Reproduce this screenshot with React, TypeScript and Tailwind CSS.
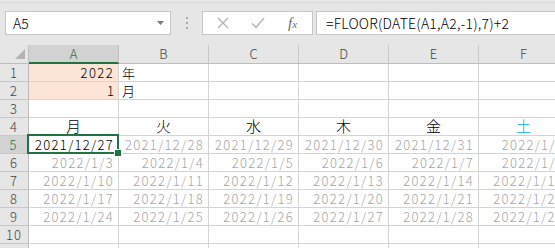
import React from "react";

const cols = ["A", "B", "C", "D", "E", "F"];
const weekdays = ["月", "火", "水", "木", "金", "土"];

function fmt(d: Date) {
  return `${d.getFullYear()}/${d.getMonth() + 1}/${d.getDate()}`;
}

// calendar rows 5-9, first Monday 2021/12/27
const start = new Date(2021, 11, 27);
const weeks = [0, 1, 2, 3, 4].map((w) =>
  cols.map((_, i) => {
    const d = new Date(start);
    d.setDate(start.getDate() + w * 7 + i);
    return fmt(d);
  })
);

function RowHead({ n, active }: { n: number; active?: boolean }) {
  return (
    <div
      className={
        active
          ? "w-[29px] h-[18px] shrink-0 flex items-center justify-center bg-[#d2d2d2] text-[#217346] border-b border-[#c8c8c8] border-r-2 border-r-[#217346] text-[13px] tracking-[1px]"
          : "w-[29px] h-[18px] shrink-0 flex items-center justify-center bg-[#e6e6e6] text-[#444] border-b border-r border-[#c8c8c8] border-r-[#bdbdbd] text-[13px] tracking-[1px]"
      }
    >
      {n}
    </div>
  );
}

function Cell({
  children,
  className = "",
}: {
  children?: React.ReactNode;
  className?: string;
}) {
  return (
    <div
      className={`w-[90px] h-[18px] shrink-0 flex items-center border-r border-b border-[#d4d4d4] whitespace-nowrap ${className}`}
    >
      {children}
    </div>
  );
}

export default function App() {
  return (
    <div className="relative w-[555px] h-[248px] overflow-hidden bg-white font-['Noto_Sans_CJK_JP',sans-serif] font-light text-black">
      {/* formula bar */}
      <div className="h-[45px] bg-[#e6e6e6]">
        <div className="h-[3px] border-b border-[#d8d8d8]" />
        <div className="flex pt-[8px] h-[32px]">
          <div className="ml-[5px] w-[166px] h-[24px] bg-white border border-[#c6c6c6] flex items-center pl-[7px] pr-[6px] text-[14px]">
            <span className="flex-1">A5</span>
            <svg width="7" height="4" viewBox="0 0 7 4">
              <path d="M0 0h7L3.5 4z" fill="#7a7a7a" />
            </svg>
          </div>
          <div className="w-[31px] flex flex-col items-center justify-center gap-[3px]">
            <span className="w-[2px] h-[2px] bg-[#a8a8a8]" />
            <span className="w-[2px] h-[2px] bg-[#a8a8a8]" />
            <span className="w-[2px] h-[2px] bg-[#a8a8a8]" />
          </div>
          <div className="w-[111px] h-[24px] bg-white border border-[#c6c6c6] flex items-center">
            <svg className="ml-[14px]" width="12" height="12" viewBox="0 0 12 12">
              <path d="M1 1l10 10M11 1L1 11" stroke="#b4b4b4" strokeWidth="1.3" />
            </svg>
            <svg className="ml-[22px]" width="14" height="12" viewBox="0 0 14 12">
              <path d="M1 6.5l4 4L13 1" stroke="#b4b4b4" strokeWidth="1.5" fill="none" />
            </svg>
            <span className="ml-[23px] font-['Liberation_Serif',serif] italic text-[15px] text-[#6a6a6a] leading-none">
              f<span className="text-[11px]">x</span>
            </span>
          </div>
          <div className="ml-[3px] flex-1 h-[24px] bg-white border border-[#c6c6c6] border-r-0 flex items-center pl-[9px] text-[14px] tracking-[0.2px]">
            =FLOOR(DATE(A1,A2,-1),7)+2
          </div>
        </div>
      </div>

      {/* sheet */}
      <div className="w-[569px]">
        {/* column headers */}
        <div className="flex h-[19px]">
          <div className="w-[29px] h-[19px] shrink-0 bg-[#e6e6e6] border-r border-b border-[#bdbdbd] flex items-end justify-end pr-[3px] pb-[4px]">
            <svg width="10" height="10" viewBox="0 0 10 10">
              <path d="M10 0v10H0z" fill="#b4b4b4" />
            </svg>
          </div>
          {cols.map((c, i) => (
            <div
              key={c}
              className={
                i === 0
                  ? "w-[90px] h-[19px] shrink-0 flex items-center justify-center bg-[#d2d2d2] text-[#217346] border-r border-[#bdbdbd] border-b-2 border-b-[#217346] text-[13px]"
                  : "w-[90px] h-[19px] shrink-0 flex items-center justify-center bg-[#e6e6e6] text-[#444] border-r border-b border-[#c8c8c8] border-b-[#bdbdbd] text-[13px]"
              }
            >
              {c}
            </div>
          ))}
        </div>

        {/* row 1 */}
        <div className="flex">
          <RowHead n={1} />
          <Cell className="justify-end pr-[4px] bg-[#fce4d6] text-[13px] tracking-[1.4px]">2022</Cell>
          <Cell className="pl-[3px] text-[13px]">年</Cell>
          {[2, 3, 4, 5].map((k) => (
            <Cell key={k} />
          ))}
        </div>
        {/* row 2 */}
        <div className="flex">
          <RowHead n={2} />
          <Cell className="justify-end pr-[4px] bg-[#fce4d6] text-[13px]">1</Cell>
          <Cell className="pl-[3px] text-[13px]">月</Cell>
          {[2, 3, 4, 5].map((k) => (
            <Cell key={k} />
          ))}
        </div>
        {/* row 3 */}
        <div className="flex">
          <RowHead n={3} />
          {cols.map((c) => (
            <Cell key={c} />
          ))}
        </div>
        {/* row 4 weekdays */}
        <div className="flex">
          <RowHead n={4} />
          {weekdays.map((w, i) => (
            <Cell
              key={w}
              className={`justify-center text-[15px] ${i === 5 ? "text-[#00b0f0]" : ""}`}
            >
              {w}
            </Cell>
          ))}
        </div>
        {/* rows 5-9 dates */}
        {weeks.map((row, r) => (
          <div key={r} className="flex">
            <RowHead n={r + 5} active={r === 0} />
            {row.map((d, i) => (
              <Cell
                key={i}
                className={`justify-end pr-[4px] text-[13px] tracking-[1.3px] ${
                  r === 0 && i === 0 ? "text-black" : "text-[#a6a6a6]"
                }`}
              >
                {d}
              </Cell>
            ))}
          </div>
        ))}
        {/* rows 10-11 */}
        {[10, 11].map((n) => (
          <div key={n} className="flex">
            <RowHead n={n} />
            {cols.map((c) => (
              <Cell key={c} />
            ))}
          </div>
        ))}
      </div>

      {/* active cell outline */}
      <div className="absolute left-[27px] top-[134px] w-[92px] h-[20px] border-2 border-[#217346]" />
      <div className="absolute left-[115px] top-[150px] w-[6px] h-[6px] bg-[#217346] outline outline-1 outline-white" />
    </div>
  );
}
